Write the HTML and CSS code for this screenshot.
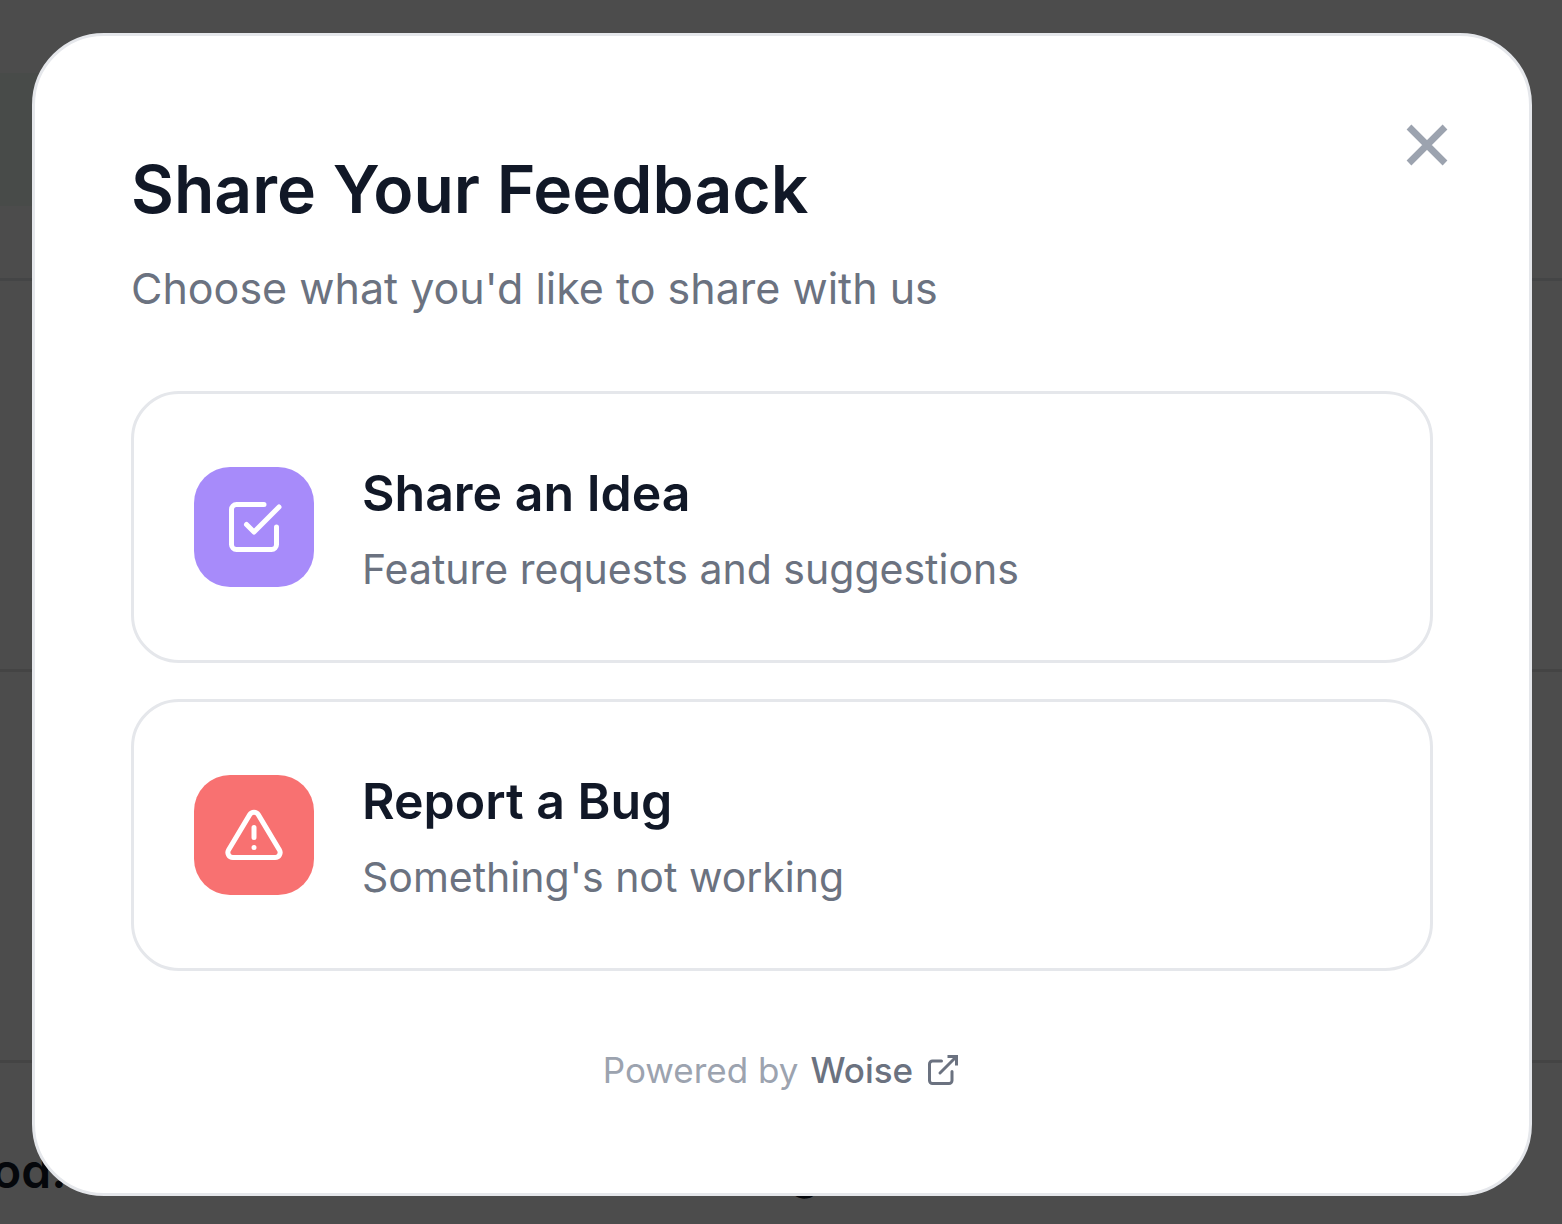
FILE: index.html
```html
<!DOCTYPE html>
<html lang="en">
<head>
    <meta charset="UTF-8">
    <meta name="viewport" content="width=device-width, initial-scale=1.0">
    <title>Share Your Feedback</title>
    <link rel="stylesheet" href="styles.css">
</head>
<body>

<div class="page" aria-hidden="true">
    <div class="page-header">
        <div class="page-tag"></div>
    </div>
    <div class="page-row"></div>
    <div class="page-row"></div>
    <div class="page-text">
        <span>od.</span>
        <span>g</span>
    </div>
</div>

<div class="overlay">
    <div class="modal" role="dialog" aria-modal="true" aria-labelledby="modal-title">
        <button class="close" type="button" aria-label="Close">
            <svg viewBox="0 0 24 24"><path d="M6 6l12 12M18 6L6 18"/></svg>
        </button>

        <h1 id="modal-title">Share Your Feedback</h1>
        <p class="subtitle">Choose what you'd like to share with us</p>

        <div class="options">
            <button class="option" type="button">
                <span class="option-icon idea">
                    <svg viewBox="0 0 24 24">
                        <path d="M9 11l3 3L22 4"/>
                        <path d="M21 12v7a2 2 0 0 1-2 2H5a2 2 0 0 1-2-2V5a2 2 0 0 1 2-2h11"/>
                    </svg>
                </span>
                <span class="option-text">
                    <span class="option-title">Share an Idea</span>
                    <span class="option-desc">Feature requests and suggestions</span>
                </span>
            </button>
            <button class="option" type="button">
                <span class="option-icon bug">
                    <svg viewBox="0 0 24 24">
                        <path d="M10.29 3.86L1.82 18a2 2 0 0 0 1.71 3h16.94a2 2 0 0 0 1.71-3L13.71 3.86a2 2 0 0 0-3.42 0z"/>
                        <path d="M12 9v4M12 17h.01"/>
                    </svg>
                </span>
                <span class="option-text">
                    <span class="option-title">Report a Bug</span>
                    <span class="option-desc">Something's not working</span>
                </span>
            </button>
        </div>

        <div class="footer">
            <span>Powered by</span>
            <a href="#">Woise
                <svg viewBox="0 0 24 24">
                    <path d="M18 13v6a2 2 0 0 1-2 2H5a2 2 0 0 1-2-2V8a2 2 0 0 1 2-2h6"/>
                    <path class="arrow" d="M15 3h6v6"/>
                    <path d="M10 14L21 3"/>
                </svg>
            </a>
        </div>
    </div>
</div>

</body>
</html>
```

FILE: styles.css
```css
* {
    box-sizing: border-box;
}
body {
    margin: 0;
    font-family: Inter, "Liberation Sans", sans-serif;
    background: #ffffff;
    color: #111827;
}
svg {
    display: block;
    fill: none;
    stroke: currentColor;
    stroke-width: 2;
    stroke-linecap: round;
    stroke-linejoin: round;
}

/* Page behind the dialog */
.page {
    height: 100vh;
    overflow: hidden;
}
.page-header {
    height: 281px;
    padding-top: 73px;
    border-bottom: 3px solid #e5e7eb;
}
.page-tag {
    width: 50%;
    height: 133px;
    background: #f1faf5;
}
.page-row {
    height: 391px;
    border-bottom: 3px solid #e5e5e5;
}
.page-text {
    display: flex;
    justify-content: space-between;
    width: 53%;
    margin-left: -8px;
    padding-top: 78px;
    font-size: 48px;
    line-height: 60px;
    font-weight: 600;
}

/* Dialog */
.overlay {
    position: fixed;
    inset: 0;
    display: flex;
    align-items: center;
    justify-content: center;
    padding: 4px 30px 0 32px;
    background: rgba(0, 0, 0, 0.7);
}
.modal {
    position: relative;
    width: 100%;
    max-width: 1500px;
    padding: 111px 96px 96px;
    background: #ffffff;
    border: 3px solid #e5e7eb;
    border-radius: 72px;
}
.close {
    position: absolute;
    top: 73px;
    right: 66px;
    padding: 0;
    border: none;
    background: none;
    color: #9ca3af;
    cursor: pointer;
}
.close svg {
    width: 72px;
    height: 72px;
    stroke-width: 2.25;
    stroke-linecap: butt;
}
h1 {
    margin: 0 0 24px;
    font-size: 66px;
    line-height: 84px;
    font-weight: 600;
}
.subtitle {
    margin: 0 0 70px;
    font-size: 43px;
    line-height: 66px;
    color: #6b7280;
}
.options {
    display: flex;
    flex-direction: column;
    gap: 36px;
}
.option {
    display: flex;
    align-items: center;
    gap: 48px;
    padding: 60px;
    border: 3px solid #e5e7eb;
    border-radius: 48px;
    background: #ffffff;
    color: #111827;
    font-family: inherit;
    text-align: left;
    cursor: pointer;
}
.option-icon {
    display: flex;
    align-items: center;
    justify-content: center;
    width: 120px;
    height: 120px;
    border-radius: 36px;
    color: #ffffff;
}
.option-icon svg {
    width: 60px;
    height: 60px;
}
.idea {
    background: #a78bfa;
}
.bug {
    background: #f87171;
}
.option-text {
    display: flex;
    flex-direction: column;
    gap: 6px;
}
.option-title {
    font-size: 50px;
    line-height: 78px;
    font-weight: 600;
}
.option-desc {
    font-size: 41px;
    line-height: 62px;
    color: #6b7280;
}
.footer {
    display: flex;
    align-items: center;
    justify-content: center;
    gap: 12px;
    margin-top: 72px;
    font-size: 35px;
    line-height: 54px;
    color: #9ca3af;
}
.footer a {
    display: flex;
    align-items: center;
    gap: 12px;
    font-weight: 500;
    color: #6b7280;
    text-decoration: none;
}
.footer svg {
    width: 36px;
    height: 36px;
}
.footer .arrow {
    stroke-linecap: butt;
    stroke-linejoin: miter;
}
```
